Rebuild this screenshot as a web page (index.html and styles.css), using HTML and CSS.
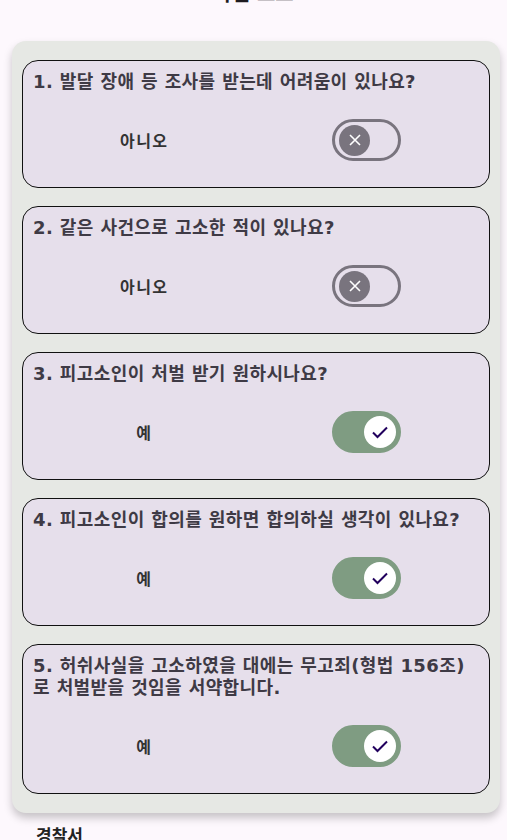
FILE: index.html
```html
<!DOCTYPE html>
<html>
<head>
	<meta charset="utf-8">
	<title>사건 고소</title>
	<link rel="stylesheet" href="styles.css">
</head>
<body>
<div class="page">
	<h1 class="title">사건 고소</h1>

	<div class="panel">
		<div class="question">
			<p class="q-text">1. 발달 장애 등 조사를 받는데 어려움이 있나요?</p>
			<div class="answer">
				<div class="cell"><span class="label">아니오</span></div>
				<div class="cell">
					<span class="switch">
						<span class="thumb"><svg width="14" height="14" viewBox="0 0 14 14"><path d="M2 2L12 12M12 2L2 12" stroke="#fff" stroke-width="1.6" fill="none"/></svg></span>
					</span>
				</div>
			</div>
		</div>

		<div class="question">
			<p class="q-text">2. 같은 사건으로 고소한 적이 있나요?</p>
			<div class="answer">
				<div class="cell"><span class="label">아니오</span></div>
				<div class="cell">
					<span class="switch">
						<span class="thumb"><svg width="14" height="14" viewBox="0 0 14 14"><path d="M2 2L12 12M12 2L2 12" stroke="#fff" stroke-width="1.6" fill="none"/></svg></span>
					</span>
				</div>
			</div>
		</div>

		<div class="question">
			<p class="q-text">3. 피고소인이 처벌 받기 원하시나요?</p>
			<div class="answer">
				<div class="cell"><span class="label">예</span></div>
				<div class="cell">
					<span class="switch on">
						<span class="thumb"><svg width="18" height="14" viewBox="0 0 18 14"><path d="M2 7.5L6.5 12L16 2.5" stroke="#21005d" stroke-width="2" fill="none"/></svg></span>
					</span>
				</div>
			</div>
		</div>

		<div class="question">
			<p class="q-text">4. 피고소인이 합의를 원하면 합의하실 생각이 있나요?</p>
			<div class="answer">
				<div class="cell"><span class="label">예</span></div>
				<div class="cell">
					<span class="switch on">
						<span class="thumb"><svg width="18" height="14" viewBox="0 0 18 14"><path d="M2 7.5L6.5 12L16 2.5" stroke="#21005d" stroke-width="2" fill="none"/></svg></span>
					</span>
				</div>
			</div>
		</div>

		<div class="question">
			<p class="q-text">5. 허쉬사실을 고소하였을 대에는 무고죄(형법 156조)로 처벌받을 것임을 서약합니다.</p>
			<div class="answer">
				<div class="cell"><span class="label">예</span></div>
				<div class="cell">
					<span class="switch on">
						<span class="thumb"><svg width="18" height="14" viewBox="0 0 18 14"><path d="M2 7.5L6.5 12L16 2.5" stroke="#21005d" stroke-width="2" fill="none"/></svg></span>
					</span>
				</div>
			</div>
		</div>
	</div>

	<h2 class="section">경찰서</h2>
</div>
</body>
</html>
```

FILE: styles.css
```css
*{margin: 0;padding: 0;box-sizing: border-box;}
body{background: #fdf8fd; font-family: "DejaVu Sans", "Noto Sans CJK KR", sans-serif; overflow: hidden;}

.title{
	font-size: 20px;
	line-height: 28px;
	margin-top: -20px;
	text-align: center;
	color: #1d1b20;
	font-weight: 700;
}

.panel{
	margin: 33px 7px 0 12px;
	padding: 19px 10px;
	background: #e6e8e4;
	border-radius: 14px;
	box-shadow: 0 5px 9px rgba(0,0,0,0.22);
	display: flex;
	flex-direction: column;
	gap: 18px;
}

.question{
	background: #e6dfeb;
	border: 1.5px solid #111;
	border-radius: 16px;
	padding: 10px 11px 26px 10px;
}
.q-text{
	font-size: 18px;
	line-height: 22px;
	font-weight: 700;
	color: #3e3a45;
	letter-spacing: 0.4px;
}

.answer{
	display: flex;
	margin-top: 26px;
	height: 42px;
}
.answer .cell{
	flex: 1;
	display: flex;
	align-items: center;
	justify-content: center;
}
.label{
	font-size: 16px;
	font-weight: 700;
	color: #333;
	letter-spacing: 1.5px;
}

.switch{
	width: 69px;
	height: 42px;
	border-radius: 21px;
	border: 3px solid #79747e;
	display: flex;
	align-items: center;
	padding: 0 4px;
}
.switch .thumb{
	width: 31px;
	height: 31px;
	border-radius: 50%;
	background: #79747e;
	display: flex;
	align-items: center;
	justify-content: center;
}
.switch.on{
	background: #7f9c82;
	border-color: #7f9c82;
	justify-content: flex-end;
	padding: 0 2px;
}
.switch.on .thumb{
	width: 32px;
	height: 32px;
	background: #fff;
}

.section{
	margin: 12px 0 0 36px;
	font-size: 17px;
	line-height: 22px;
	font-weight: 700;
	color: #222;
}
```
